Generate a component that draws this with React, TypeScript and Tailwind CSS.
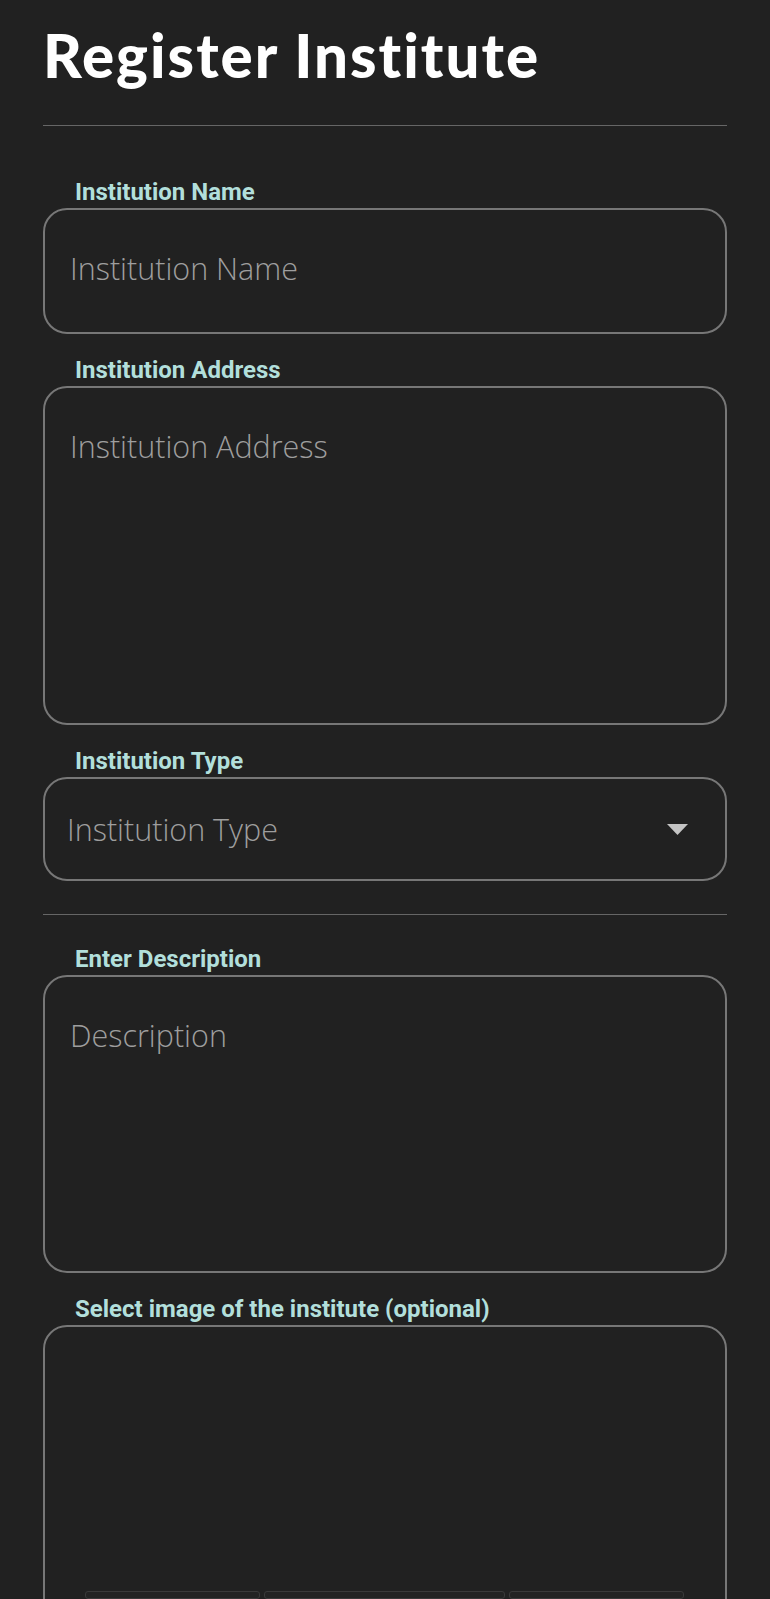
import React from "react";

const labelCls =
  "pl-[32px] font-['Roboto',sans-serif] font-bold text-[24px] leading-[24px] text-[#b2dfdb]";
const boxCls = "mt-[4px] rounded-[24px] border-2 border-[#777777]";
const phCls =
  "font-['Open_Sans',sans-serif] font-light text-[30.5px] leading-[42px] text-[#9e9e9e]";

export default function App() {
  return (
    <div className="w-[770px] h-[1599px] overflow-hidden bg-[#212121] pl-[43px] pr-[43px]">
      <h1 className="pt-[25px] font-['Lato',sans-serif] font-black text-[60px] leading-[60px] tracking-[2px] text-white">
        Register Institute
      </h1>
      <div className="mt-[40px] h-px bg-[#666666]" />

      <div className={`mt-[54px] ${labelCls}`}>Institution Name</div>
      <div className={`${boxCls} h-[126px] pt-[37px] pl-[25px] pr-[24px]`}>
        <div className={phCls}>Institution Name</div>
      </div>

      <div className={`mt-[24px] ${labelCls}`}>Institution Address</div>
      <div className={`${boxCls} h-[339px] pt-[37px] pl-[25px] pr-[24px]`}>
        <div className={phCls}>Institution Address</div>
      </div>

      <div className={`mt-[24px] ${labelCls}`}>Institution Type</div>
      <div className={`${boxCls} h-[104px] flex items-center justify-between pl-[22px] pr-[37px]`}>
        <div className={phCls}>Institution Type</div>
        <svg width="21" height="11" viewBox="0 0 21 11" className="mt-[1px]">
          <polygon points="0,0 21,0 10.5,11" fill="#c4c4c4" />
        </svg>
      </div>

      <div className="mt-[33px] h-px bg-[#666666]" />

      <div className={`mt-[32px] ${labelCls}`}>Enter Description</div>
      <div className={`${boxCls} h-[298px] pt-[37px] pl-[25px] pr-[24px]`}>
        <div className={phCls}>Description</div>
      </div>

      <div className={`mt-[24px] ${labelCls}`}>Select image of the institute (optional)</div>
      <div className={`${boxCls} h-[400px] pt-[264px] pl-[40px] pr-[39px]`}>
        <div className="flex gap-[4px]">
          <div className="w-[175px] h-[8px] rounded-[3px] border border-[#3a3a3a] bg-[#232323]" />
          <div className="w-[241px] h-[8px] rounded-[3px] border border-[#3a3a3a] bg-[#232323]" />
          <div className="w-[175px] h-[8px] rounded-[3px] border border-[#3a3a3a] bg-[#232323]" />
        </div>
      </div>
    </div>
  );
}
